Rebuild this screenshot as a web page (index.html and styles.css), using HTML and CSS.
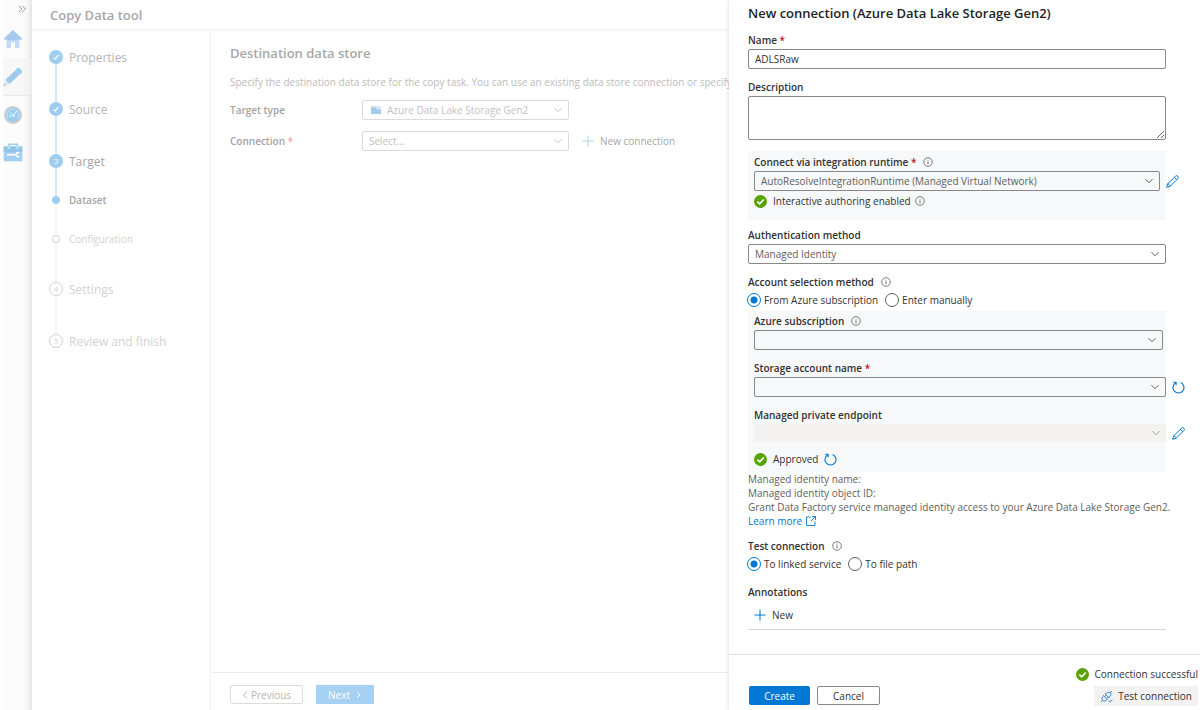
FILE: index.html
```html
<!DOCTYPE html>
<html lang="en">
<head>
<meta charset="utf-8">
<title>Copy Data tool</title>
<meta name="viewport" content="width=device-width, initial-scale=1">
<link rel="stylesheet" href="styles.css">
</head>
<body>
<svg class="defs" aria-hidden="true">
  <symbol id="chevron" viewBox="0 0 8 8"><path d="M.5 2.2 4 5.7 7.5 2.2" fill="none" stroke="currentColor"/></symbol>
  <symbol id="info" viewBox="0 0 10 10"><circle cx="5" cy="5" r="4.3" fill="none" stroke="currentColor" stroke-width=".8"/><path d="M5 4.3v3M5 2.6v.9" fill="none" stroke="currentColor" stroke-width=".9"/></symbol>
  <symbol id="ok" viewBox="0 0 12 12"><circle cx="6" cy="6" r="6" fill="#57a300"/><path d="M3.1 6.1 5.2 8.2 9 4.2" fill="none" stroke="#fff" stroke-width="1.5"/></symbol>
  <symbol id="plus" viewBox="0 0 12 12"><path d="M6 .5v11M.5 6h11" fill="none" stroke="currentColor"/></symbol>
  <symbol id="edit" viewBox="0 0 13 13"><path d="M.7 12.3 1.6 9 9.4 1.2a1.6 1.6 0 0 1 2.4 2.4L4 11.4zM8.3 2.3l2.4 2.4M1.6 9C2.9 9.1 3.9 10 4 11.4" fill="none" stroke="currentColor" stroke-width="1" stroke-linejoin="round"/></symbol>
  <symbol id="refresh" viewBox="0 0 13 13"><path d="M8.6 1.500a5.500 5.500 0 1 1-5.200.5M1.200 1.200h2.900v3" fill="none" stroke="currentColor" stroke-width="1.1"/></symbol>
  <symbol id="tick" viewBox="0 0 14 14"><path d="M4.500 7.400 6.200 9.200 9.500 4.800" fill="none" stroke="#fff" stroke-width="1.1"/></symbol>
</svg>
<div class="app">
  <nav class="rail" aria-label="Main">
    <button class="rail-expand" aria-label="Expand"><svg width="8" height="8" viewBox="0 0 8 8"><path d="M.8.8 4 4 .8 7.2M4.2.8 7.4 4 4.2 7.2" fill="none" stroke="#8f8f8f" stroke-width=".9"/></svg></button>
    <a class="rail-item" href="#home" aria-label="Home"><svg width="20" height="20" viewBox="0 0 20 20"><path d="M3.500 8.500h13V19h-4.700v-5.500H8.300V19H3.500z" fill="#c2daf7"/><path d="M10 1 .7 9.700l1.200 1.200 1.600-1v1h13v-1l1.600 1 1.200-1.200z" fill="#a5caef"/><path d="M8.300 13.500h3.500V19H8.300z" fill="#fff"/></svg></a>
    <a class="rail-item rail-active" href="#author" aria-label="Author"><svg width="20" height="20" viewBox="0 0 20 20"><path d="M13.500 2.200 17.800 6.500 6.500 17 2.200 12.900z" fill="#9fc9ec"/><path d="m13 2.600 1.600-1.500q1-.8 2 .1l2.300 2.300q.8.900 0 1.900l-1.500 1.500z" fill="#9edff2"/><path d="m14.300 1.400 4.300 4.300" stroke="#8ec3ea" stroke-width="1.600"/><path d="m2.200 12.900 4.300 4.100-6 2z" fill="#e7e8ea"/><path d="m1.200 16.500 1.900 1.800-2.700.9z" fill="#9ac8ec"/></svg></a>
    <a class="rail-item" href="#monitor" aria-label="Monitor"><svg width="20" height="20" viewBox="0 0 20 20"><circle cx="10" cy="10" r="8.200" fill="#9dc9ed" stroke="#cfcfcf" stroke-width="1.800"/><path d="M5.300 13.500a5.700 5.700 0 0 1 7.100-8.500M15 7.500a5.700 5.700 0 0 1-.3 6M7.400 12.600a3.400 3.400 0 0 1 2-5.300" fill="none" stroke="#bdeaf7" stroke-width="1.100"/><path d="m10 10.500 4.600-5.200" stroke="#c6effa" stroke-width="1.300"/><circle cx="10" cy="10.600" r="1.700" fill="#c6effa"/></svg></a>
    <a class="rail-item" href="#manage" aria-label="Manage"><svg width="20" height="20" viewBox="0 0 20 20"><path d="M6 4V1.300h8.500V4" fill="none" stroke="#9fcdee" stroke-width="1.500"/><path d="M.7 3.500h18.600v14.800H.7z" fill="#a3cfee"/><path d="M.7 3.500h18.600V9H.7z" fill="#94c4ea"/><path d="M5 3.500h1.800v2.600H5zM13.500 3.500h1.800v2.600h-1.800z" fill="#bdeaf7"/><path d="M4 11.700h8.500" stroke="#fff" stroke-width="1.500"/><path d="M16.300 10.200a2 2 0 1 0 0 3" fill="none" stroke="#fff" stroke-width="1.400"/></svg></a>
  </nav>
  <main class="tool">
    <header class="tool-header"><h1>Copy Data tool</h1></header>
    <div class="tool-body">
      <ol class="steps">
        <li class="step done"><span class="marker"><svg width="14" height="14"><use href="#tick"/></svg></span>Properties</li>
        <li class="step done"><span class="marker"><svg width="14" height="14"><use href="#tick"/></svg></span>Source</li>
        <li class="step done current to-sub"><span class="marker">3</span>Target</li>
        <li class="step sub sub-current"><span class="marker"></span>Dataset</li>
        <li class="step sub"><span class="marker"></span>Configuration</li>
        <li class="step"><span class="marker">4</span>Settings</li>
        <li class="step"><span class="marker">5</span>Review and finish</li>
      </ol>
      <section class="destination">
        <div class="destination-body">
          <h2>Destination data store</h2>
          <p class="hint">Specify the destination data store for the copy task. You can use an existing data store connection or specify a new data store.</p>
          <div class="row">
            <label for="target-type">Target type</label>
            <div class="select with-icon">
              <svg class="lake" width="10" height="8" viewBox="0 0 10 8"><path d="M0 0h10v8H0z" fill="#dcdfe2"/><path d="M0 1.500h5l1 2h4V8H0z" fill="#a0cbeb"/><path d="M5 0h5v3H6z" fill="#d9e8f2"/></svg>
              <select id="target-type"><option>Azure Data Lake Storage Gen2</option></select>
              <svg class="chevron" width="8" height="8"><use href="#chevron"/></svg>
            </div>
          </div>
          <div class="row">
            <label for="connection">Connection <span class="req">*</span></label>
            <div class="select">
              <select id="connection"><option>Select...</option></select>
              <svg class="chevron" width="8" height="8"><use href="#chevron"/></svg>
            </div>
            <button class="link-button"><svg width="12" height="12"><use href="#plus"/></svg>New connection</button>
          </div>
        </div>
        <footer class="tool-footer">
          <button class="btn btn-prev"><svg width="6" height="8" viewBox="0 0 6 8"><path d="M5 .5 1.500 4 5 7.500" fill="none" stroke="currentColor"/></svg>Previous</button>
          <button class="btn btn-next">Next<svg width="6" height="8" viewBox="0 0 6 8"><path d="M1 1 4 4 1 7" fill="none" stroke="currentColor"/></svg></button>
        </footer>
      </section>
    </div>
  </main>
  <aside class="panel">
    <form class="form" onsubmit="return false">
      <h2>New connection (Azure Data Lake Storage Gen2)</h2>
      <div class="field">
        <label for="name">Name <span class="req">*</span></label>
        <input id="name" class="text" type="text" value="ADLSRaw">
      </div>
      <div class="field">
        <label for="description">Description</label>
        <textarea id="description" class="text"></textarea>
      </div>
      <div class="group runtime">
        <div class="field">
          <label for="runtime">Connect via integration runtime <span class="req">*</span><svg class="info" width="10" height="10"><use href="#info"/></svg></label>
          <div class="control">
            <div class="select">
              <select id="runtime"><option>AutoResolveIntegrationRuntime (Managed Virtual Network)</option></select>
              <svg class="chevron" width="8" height="8"><use href="#chevron"/></svg>
            </div>
            <button class="icon-button" aria-label="Edit runtime"><svg width="13" height="13"><use href="#edit"/></svg></button>
          </div>
        </div>
        <p class="status"><svg width="13" height="13"><use href="#ok"/></svg>Interactive authoring enabled<svg class="status-info" width="10" height="10"><use href="#info"/></svg></p>
      </div>
      <div class="field auth">
        <label for="auth">Authentication method</label>
        <div class="select">
          <select id="auth"><option>Managed Identity</option></select>
          <svg class="chevron" width="8" height="8"><use href="#chevron"/></svg>
        </div>
      </div>
      <fieldset>
        <legend>Account selection method<svg class="info" width="10" height="10"><use href="#info"/></svg></legend>
        <div class="radios">
          <label><input type="radio" name="account" checked>From Azure subscription</label>
          <label><input type="radio" name="account">Enter manually</label>
        </div>
      </fieldset>
      <div class="group account">
        <div class="field">
          <label for="subscription">Azure subscription<svg class="info" width="10" height="10"><use href="#info"/></svg></label>
          <div class="select">
            <select id="subscription"><option></option></select>
            <svg class="chevron" width="8" height="8"><use href="#chevron"/></svg>
          </div>
        </div>
        <div class="field">
          <label for="storage">Storage account name <span class="req">*</span></label>
          <div class="control">
            <div class="select">
              <select id="storage"><option></option></select>
              <svg class="chevron" width="8" height="8"><use href="#chevron"/></svg>
            </div>
            <button class="icon-button" aria-label="Refresh accounts"><svg width="13" height="13"><use href="#refresh"/></svg></button>
          </div>
        </div>
        <div class="field">
          <label for="endpoint">Managed private endpoint</label>
          <div class="control">
            <div class="select">
              <select id="endpoint" disabled><option></option></select>
              <svg class="chevron" width="8" height="8"><use href="#chevron"/></svg>
            </div>
            <button class="icon-button" aria-label="Edit endpoint"><svg width="13" height="13"><use href="#edit"/></svg></button>
          </div>
        </div>
        <p class="status"><svg width="13" height="13"><use href="#ok"/></svg>Approved<button class="refresh" aria-label="Refresh status"><svg width="13" height="13"><use href="#refresh"/></svg></button></p>
      </div>
      <div class="identity">
        <p>Managed identity name:</p>
        <p>Managed identity object ID:</p>
        <p>Grant Data Factory service managed identity access to your Azure Data Lake Storage Gen2.</p>
        <a href="#learn">Learn more<svg width="10" height="10" viewBox="0 0 10 10"><path d="M4.500 1H.5v8.500H9V5.500M6 .5h3.500V4M9.500.5 5 5" fill="none" stroke="currentColor" stroke-width=".9"/></svg></a>
      </div>
      <fieldset>
        <legend>Test connection<svg class="info" width="10" height="10"><use href="#info"/></svg></legend>
        <div class="radios">
          <label><input type="radio" name="test" checked>To linked service</label>
          <label><input type="radio" name="test">To file path</label>
        </div>
      </fieldset>
      <section class="annotations">
        <h3>Annotations</h3>
        <button class="link-button"><svg width="12" height="12"><use href="#plus"/></svg>New</button>
      </section>
    </form>
    <footer class="panel-footer">
      <div class="actions">
        <button class="btn btn-create">Create</button>
        <button class="btn btn-cancel">Cancel</button>
      </div>
      <div class="result">
        <p class="status"><svg width="13" height="13"><use href="#ok"/></svg>Connection successful</p>
        <button class="btn-test"><svg width="13" height="13" viewBox="0 0 13 13"><path d="M5 3.800 9.200 8M5.400 4.200C6.800 2.300 8.800 1.600 10.200 2.800S10.700 6.200 8.800 7.600M10.200 2.800 12 1M3.300 5.500 7.500 9.700M3.700 5.900C1.800 7.300 1.400 9 2.700 10.300S5.700 11.200 7.100 9.300M2.700 10.300 1 12M4.500 6.700 6 5.200M6.300 8.500 7.800 7M8.500 10.800l1.300 1.300 2.500-2.700" fill="none" stroke="#1a7bd0" stroke-width=".9"/></svg>Test connection</button>
      </div>
    </footer>
  </aside>
</div>
</body>
</html>
```
FILE: styles.css
```css
* { box-sizing: border-box; }
body {
  margin: 0;
  background: #fff;
  color: #323130;
  font: 10px/14px "Open Sans", "Noto Sans", sans-serif;
}
h1, h2, h3, p, ol, fieldset, legend { margin: 0; padding: 0; border: 0; }
h1, h2 { font-weight: 600; }
button, input, select, textarea { margin: 0; padding: 0; border: 0; background: none; color: inherit; font: inherit; }
svg { flex: none; display: block; }
.defs { position: absolute; width: 0; height: 0; }
.req { color: #c50f1f; }

.app { display: flex; height: 100vh; min-height: 700px; padding-left: 3px; }

.rail {
  flex: none;
  width: 29px;
  background: linear-gradient(to right, #fcfcfc 20px, #f4f4f4 25px, #e4e4e4);
}
.rail-expand { display: block; margin: 5px 0 7px 15px; height: 8px; }
.rail-item {
  display: flex;
  align-items: center;
  height: 38px;
}
.rail-active { background: #f3f2f180; box-shadow: inset 0 -1px #eaeaea; }

.tool { flex: 1; min-width: 0; display: flex; flex-direction: column; color: #b3b2b1; }
.tool-header { height: 31px; padding: 5px 18px; border-bottom: 2px solid #f5f5f5; }
.tool-header h1 { font-size: 13px; line-height: 20px; color: #a8a7a6; }
.tool-body { flex: 1; min-height: 0; display: flex; }

.steps { flex: none; width: 179px; padding: 19px 0 0 17px; border-right: 1px solid #efefef; list-style: none; }
.step {
  position: relative;
  display: flex;
  gap: 6px;
  height: 52px;
  font-size: 12px;
  line-height: 16px;
  color: #d3d2d1;
}
.step::before {
  content: "";
  position: absolute;
  left: 6px;
  top: 8px;
  width: 2px;
  height: 100%;
  background: #f4f4f4;
}
.step:last-child::before { display: none; }
.step:last-child { height: 16px; }
.marker {
  position: relative;
  flex: none;
  width: 14px;
  height: 14px;
  border: 1px solid #d3d2d1;
  border-radius: 50%;
  background: #fff;
  font-size: 8px;
  line-height: 12px;
  text-align: center;
}
.done { color: #b5b4b3; }
.done .marker { border: 0; background: #9fcdf0; color: #fff; line-height: 14px; }
.done::before, .sub-current.done::before { background: #d3e7f8; }
.current { color: #a5a4a3; font-weight: 500; }
.to-sub, .sub { height: 39px; }
.sub { font-size: 10px; line-height: 14px; }
.sub .marker { width: 8px; height: 8px; margin: 3px; }
.sub-current { color: #a5a4a3; font-weight: 600; }
.sub-current .marker { border: 0; background: #9fcdf0; }
.sub:not(.sub-current) { height: 50px; }

.destination { flex: 1; min-width: 0; display: flex; flex-direction: column; }
.destination-body { flex: 1; padding: 12px 0 0 19px; overflow: hidden; }
.destination h2 { font-size: 13px; line-height: 20px; color: #a8a7a6; }
.hint { margin: 12px 0 11px; white-space: nowrap; overflow: hidden; color: #bdbcbb; }
.row { display: flex; align-items: center; margin-top: 11px; height: 20px; }
.row label { width: 132px; color: #a5a4a3; font-weight: 600; }
.row .req { color: #e8a5aa; }
.row .select { flex: none; width: 207px; border-color: #dcdbda; color: #c3c2c1; }
.row .link-button { margin-left: 13px; color: #a8a7a6; }
.row .link-button svg { color: #a9d0f0; }
.tool-footer { display: flex; gap: 13px; height: 38px; padding: 12px 0 0 19px; border-top: 1px solid #efefef; }

.select { position: relative; flex: 1; display: flex; align-items: center; height: 20px; border: 1px solid #8a8886; border-radius: 2px; color: #605e5c; }
.select select { width: 100%; height: 18px; padding: 0 24px 0 6px; appearance: none; opacity: 1; }
.chevron { position: absolute; right: 6px; pointer-events: none; }
.select.with-icon select { padding-left: 24px; }
.lake { position: absolute; left: 8px; }
.link-button { display: flex; align-items: center; gap: 6px; }

.btn { display: flex; align-items: center; justify-content: center; height: 19px; border-radius: 2px; }
.btn-prev { width: 73px; gap: 3px; border: 1px solid #dcdbda; color: #b5b4b3; }
.btn-next { width: 58px; gap: 6px; background: #a6d1f2; color: #fff; border-radius: 0; }

.panel {
  position: relative;
  flex: none;
  width: 471px;
  display: flex;
  flex-direction: column;
  background: #fff;
  box-shadow: 0 0 5px #00000026;
}
.form { flex: 1; min-height: 0; padding: 3px 34px 0 19px; }
.form h2 { margin-bottom: 10px; font-size: 13px; line-height: 20px; color: #201f1e; }
.form .field > label, legend, .annotations h3 {
  display: flex;
  align-items: center;
  height: 14px;
  margin-bottom: 2px;
  font-size: 10px;
  font-weight: 600;
  white-space: pre;
  color: #323130;
}
.field { margin-bottom: 11px; }
.form .select { flex: auto; }
.text { display: block; width: 100%; height: 20px; padding: 0 6px; border: 1px solid #8a8886; border-radius: 2px; }
textarea.text { height: 44px; resize: vertical; }
.info { margin-left: 7px; color: #605e5c; }
.group { padding: 4px 6px 0; background: #f6f8fa; }
.control { display: flex; align-items: center; }
.control .icon-button { width: 13px; margin-left: 6px; }
.icon-button, .refresh { color: #0078d4; }
.runtime .control { margin-right: -19px; }
.runtime { height: 69px; margin-bottom: 8px; }
.runtime .field { margin-bottom: 3px; }
.status { display: flex; align-items: center; gap: 6px; height: 14px; color: #323130; }
.status-info { margin-left: -2px; color: #605e5c; }
.radios { display: flex; gap: 8px; }
.radios label { display: flex; align-items: center; gap: 3px; height: 18px; }
.radios input {
  flex: none;
  width: 14px;
  height: 14px;
  margin-left: -1px;
  border: 1px solid #605e5c;
  border-radius: 50%;
  appearance: none;
}
.radios input:checked { border-color: #0078d4; background: radial-gradient(circle, #0078d4 3px, #fff 4px); }
.account { height: 161px; margin-top: 2px; padding: 3px 3px 0 6px; }
.account .control { margin-right: -22px; }
.account .field:has(select:disabled) { margin-bottom: 10px; }
.account .select:has(select:disabled) { height: 18px; border: 0; background: #f3f2f1; color: #a19f9d; }
.refresh { width: 13px; height: 13px; }
.identity { padding-bottom: 11px; color: #605e5c; white-space: nowrap; }
.identity a { display: flex; align-items: center; gap: 4px; height: 14px; color: #0078d4; text-decoration: none; }
.annotations { margin-top: 12px; padding-bottom: 7px; border-bottom: 1px solid #d8d8d8; }
.annotations .link-button { margin: 9px 0 0 6px; }
.link-button svg { color: #0078d4; }

.panel-footer { display: flex; justify-content: space-between; height: 56px; padding: 0 2px 0 20px; border-top: 1px solid #e1e1e1; }
.actions { display: flex; gap: 7px; padding-top: 31px; }
.btn-create { width: 61px; background: #0078d4; color: #fff; }
.btn-cancel { width: 63px; border: 1px solid #8a8886; }
.result { display: flex; flex-direction: column; align-items: flex-end; padding-top: 12px; gap: 5px; }
.btn-test { display: flex; align-items: center; gap: 5px; height: 20px; padding: 0 6px; background: #f3f2f1; }
```
